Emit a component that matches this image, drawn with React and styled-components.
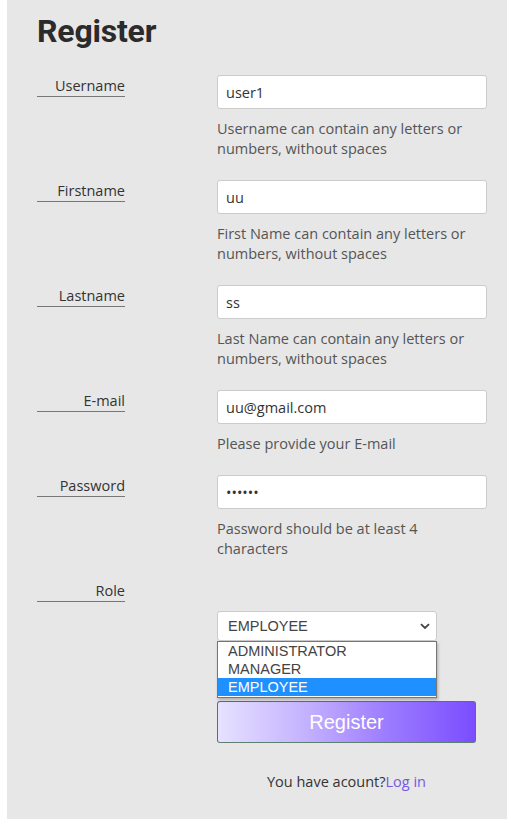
import React, { useState } from 'react'
import styled, { createGlobalStyle } from 'styled-components'

const GlobalStyle = createGlobalStyle`
body{
  margin:0;
  background:#fff;
  font-family:"Open Sans","Noto Sans",sans-serif;
}
`;

const fields = [
  { label: 'Username', value: 'user1', type: 'text', help: 'Username can contain any letters or numbers, without spaces' },
  { label: 'Firstname', value: 'uu', type: 'text', help: 'First Name can contain any letters or numbers, without spaces' },
  { label: 'Lastname', value: 'ss', type: 'text', help: 'Last Name can contain any letters or numbers, without spaces' },
  { label: 'E-mail', value: 'uu@gmail.com', type: 'text', help: 'Please provide your E-mail' },
  { label: 'Password', value: 'secret', type: 'password', help: 'Password should be at least 4 characters' },
];

const roles = ['ADMINISTRATOR', 'MANAGER', 'EMPLOYEE'];

export default function App() {
  const [role, setRole] = useState('EMPLOYEE');

  return (
    <>
      <GlobalStyle />
      <Panel>
        <Title>Register</Title>
        {fields.map((f) => (
          <Row key={f.label}>
            <Label>{f.label}</Label>
            <Field>
              <Input type={f.type} defaultValue={f.value} />
              <Help>{f.help}</Help>
            </Field>
          </Row>
        ))}
        <Row>
          <Label>Role</Label>
          <Field>
            <SelectWrap>
              <Select value={role} onChange={(e) => setRole(e.target.value)}>
                {roles.map((r) => (
                  <option key={r}>{r}</option>
                ))}
              </Select>
              <Chevron width="10" height="7" viewBox="0 0 10 7">
                <path d="M1 1.2 L5 5 L9 1.2" fill="none" stroke="#444" strokeWidth="1.8" />
              </Chevron>
              <Options>
                {roles.map((r) => (
                  <Option key={r} $active={r === role}>{r}</Option>
                ))}
              </Options>
            </SelectWrap>
            <Button>Register</Button>
            <Footer>
              You have acount?<LoginLink href="#">Log in</LoginLink>
            </Footer>
          </Field>
        </Row>
      </Panel>
    </>
  )
}

const Panel = styled.div`
margin-left:7px;
width:500px;
min-height:819px;
box-sizing:border-box;
background:#e7e7e7;
padding:12px 20px 0 30px;
`;
const Title = styled.h1`
margin:0 0 25px;
font-family:Roboto,"Noto Sans",sans-serif;
font-weight:700;
font-size:32px;
line-height:38px;
color:#2b2b2b;
letter-spacing:-0.2px;
`;
const Row = styled.div`
display:grid;
grid-template-columns:88px 270px;
column-gap:92px;
margin-bottom:21px;
`;
const Label = styled.div`
align-self:start;
margin-top:1px;
text-align:right;
font-size:14.5px;
line-height:20px;
color:#333;
border-bottom:1px solid #777;
`;
const Field = styled.div`
display:flex;
flex-direction:column;
`;
const Input = styled.input`
box-sizing:border-box;
width:270px;
height:34px;
border:1px solid #ccc;
border-radius:3px;
padding:0 8px;
font-family:"Open Sans","Noto Sans",sans-serif;
font-size:14.5px;
color:#333;
background:#fff;
outline:none;
`;
const Help = styled.div`
margin-top:10px;
font-size:14.5px;
line-height:20px;
color:#555;
width:260px;
`;
const SelectWrap = styled.div`
position:relative;
width:220px;
margin-top:31px;
`;
const Select = styled.select`
appearance:none;
box-sizing:border-box;
width:220px;
height:30px;
border:1px solid #ccc;
border-radius:3px;
background:#fff;
padding:0 10px;
font-family:"Liberation Sans",Arial,sans-serif;
font-size:14.5px;
color:#444;
outline:none;
`;
const Chevron = styled.svg`
position:absolute;
right:7px;
top:12px;
pointer-events:none;
`;
const Options = styled.div`
position:absolute;
left:0;
top:30px;
width:220px;
box-sizing:border-box;
background:#fff;
border:1px solid #767676;
box-shadow:1px 2px 3px rgba(0,0,0,0.25);
padding:0 0 1px;
z-index:2;
`;
const Option = styled.div`
height:18px;
line-height:18px;
padding:0 10px;
font-family:"Liberation Sans",Arial,sans-serif;
font-size:14.5px;
color:${(p) => (p.$active ? '#fff' : '#444')};
background:${(p) => (p.$active ? '#1e90ff' : '#fff')};
`;
const Button = styled.button`
margin-top:60px;
width:259px;
height:42px;
border:1px solid #6b5fa0;
border-bottom-color:#5f7f6f;
border-radius:3px;
background:linear-gradient(to right,#e6e2ff 0%,#c3b0ff 35%,#9d7dff 65%,#7b4dff 100%);
color:#fff;
font-family:"Liberation Sans",Arial,sans-serif;
font-size:20px;
cursor:pointer;
`;
const Footer = styled.div`
width:259px;
margin-top:29px;
text-align:center;
font-size:14.5px;
line-height:20px;
color:#333;
`;
const LoginLink = styled.a`
color:#7658e0;
text-decoration:none;
`;
